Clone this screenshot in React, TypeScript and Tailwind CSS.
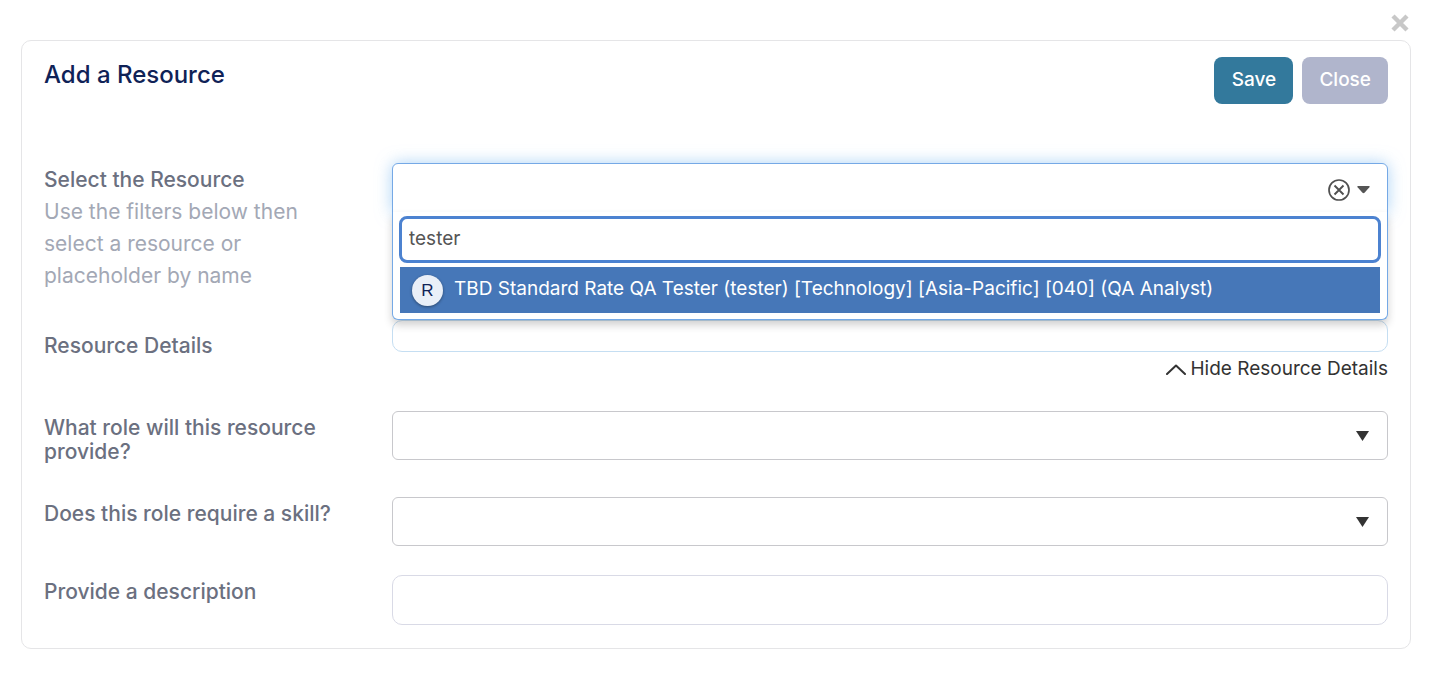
import { useState } from 'react';
import type { ReactNode } from 'react';
import clsx from 'clsx';

const RESOURCES = [
  {
    id: 'tbd-qa-tester',
    initial: 'R',
    name: 'TBD Standard Rate QA Tester (tester) [Technology] [Asia-Pacific] [040] (QA Analyst)',
  },
];

type RowProps = {
  label: string;
  htmlFor: string;
  hint?: string;
  className?: string;
  labelClassName?: string;
  children: ReactNode;
};

const FormRow = ({ label, htmlFor, hint, className, labelClassName, children }: RowProps) => (
  <div className={clsx('grid grid-cols-[300px_minmax(0,1fr)] gap-x-12', className)}>
    <div className={labelClassName}>
      <label htmlFor={htmlFor} className="block text-[21px] leading-6 font-medium text-[#6b7080]">
        {label}
      </label>
      {hint && <p className="mt-1 w-[270px] text-[21px] leading-8 text-[#a3a8b5]">{hint}</p>}
    </div>
    <div className="min-w-0">{children}</div>
  </div>
);

const SelectBox = ({ id }: { id: string }) => (
  <div className="relative">
    <select
      id={id}
      className="block h-[49px] w-full appearance-none rounded-md border border-[#c8c8cc] bg-white px-4 text-[19px]"
    >
      <option value=""></option>
    </select>
    <svg viewBox="0 0 13 10" className="pointer-events-none absolute top-5 right-[19px] h-[10px] w-[13px]" aria-hidden="true">
      <path d="M0 0h13L6.500 10z" fill="#333" />
    </svg>
  </div>
);

const ResourcePicker = () => {
  const [open, setOpen] = useState(true);
  const [query, setQuery] = useState('tester');
  const matches = RESOURCES.filter(r => r.name.toLowerCase().includes(query.toLowerCase()));

  return (
    <div className="relative">
      <div
        className={clsx(
          'flex h-[50px] items-center justify-end gap-[7px] border border-[#75a9e6] bg-white pt-1 pr-[17px] shadow-[0_0_16px_#75b5f099]',
          open ? 'rounded-t-md' : 'rounded-md'
        )}
      >
        <button type="button" aria-label="Clear selection" onClick={() => setQuery('')}>
          <svg viewBox="0 0 22 22" className="size-[22px]" fill="none" stroke="#505050">
            <circle cx="11" cy="11" r="10" strokeWidth="1.7" />
            <path d="M6.500 6.500l9 9M15.500 6.500l-9 9" strokeWidth="1.9" />
          </svg>
        </button>
        <button type="button" aria-label="Toggle options" aria-expanded={open} onClick={() => setOpen(!open)}>
          <svg viewBox="0 0 13 8" className="h-2 w-[13px]">
            <path d="M1 0h11q1.200 .2.4 1.200L7.500 6.700q-1 .9-2 0L.6 1.200Q-.2.2 1 0z" fill="#555" />
          </svg>
        </button>
      </div>
      {open && (
        <div className="absolute inset-x-0 top-[49px] z-10 rounded-b-md border border-t-0 border-[#75a9e6] bg-white px-[6px] pt-1 pb-[6px] shadow-[0_5px_8px_#00000030]">
          <input
            id="resource"
            type="text"
            value={query}
            onChange={e => setQuery(e.target.value)}
            className="block h-[47px] w-full rounded-lg border-[3px] border-[#4c82d0] bg-white px-[7px] pb-[2px] text-[19px] text-[#555] outline-none"
          />
          <ul role="listbox" className="mx-px mt-1">
            {matches.map(r => (
              <li key={r.id} role="option" aria-selected="true" className="flex h-[46px] items-center gap-[11px] bg-[#4677b8] px-3 text-white">
                <span className="flex size-[31px] shrink-0 items-center justify-center rounded-full bg-[#e9eff8] pt-[2px] font-['Liberation_Sans',sans-serif] text-[17px] text-[#0f2257] shadow-[0_1px_3px_#00000066]">
                  {r.initial}
                </span>
                <span className="truncate pb-[3px] text-[19px] leading-7">{r.name}</span>
              </li>
            ))}
          </ul>
        </div>
      )}
    </div>
  );
};

export default function App() {
  const [showDetails, setShowDetails] = useState(true);

  return (
    <div className="bg-white px-[21px] pb-10 font-['Inter',sans-serif]">
      <div className="flex h-10 justify-end pt-[14px] pr-[2px]">
        <button type="button" aria-label="Close dialog" className="size-[18px]">
          <svg viewBox="0 0 18 18" className="size-[18px]" fill="none" stroke="#c8c8c8" strokeWidth="4.4">
            <path d="M2 2l14 14M16 2L2 16" />
          </svg>
        </button>
      </div>
      <form className="rounded-[10px] border border-[#e5e5e7] px-[22px] pt-4 pb-[23px]" onSubmit={e => e.preventDefault()}>
        <header className="flex items-start justify-between">
          <h1 className="pt-[2px] text-[24px] leading-8 font-medium text-[#0f2257]">Add a Resource</h1>
          <div className="flex gap-[9px] text-[19px] font-medium text-white">
            <button type="submit" className="h-[47px] min-w-[79px] rounded-lg bg-[#33799c] px-4 pb-px">
              Save
            </button>
            <button type="button" className="h-[47px] rounded-lg bg-[#b0b5cc] px-[17px] pb-px">
              Close
            </button>
          </div>
        </header>

        <FormRow
          label="Select the Resource"
          htmlFor="resource"
          hint="Use the filters below then select a resource or placeholder by name"
          className="mt-[59px]"
          labelClassName="pt-[5px]"
        >
          <ResourcePicker />
        </FormRow>

        <FormRow label="Resource Details" htmlFor="details" className="mt-7" labelClassName="pt-[14px]">
          {showDetails && (
            <input id="details" type="text" readOnly className="block h-8 w-full rounded-[10px] border border-[#c5def2] bg-white px-3" />
          )}
          <div className="flex justify-end pt-[2px]">
            <button
              type="button"
              onClick={() => setShowDetails(!showDetails)}
              className="flex items-center gap-1 text-[19px] leading-[29px] text-[#333]"
            >
              <svg viewBox="0 0 20 12" className={clsx('h-3 w-5', !showDetails && 'rotate-180')} fill="none" stroke="#333" strokeWidth="2">
                <path d="M1 11l9-8.500 9 8.500" strokeLinecap="round" strokeLinejoin="round" />
              </svg>
              {showDetails ? 'Hide' : 'Show'} Resource Details
            </button>
          </div>
        </FormRow>

        <FormRow label="What role will this resource provide?" htmlFor="role" className="mt-7" labelClassName="pt-[5px]">
          <SelectBox id="role" />
        </FormRow>

        <FormRow label="Does this role require a skill?" htmlFor="skill" className="mt-[33px]" labelClassName="pt-[5px]">
          <SelectBox id="skill" />
        </FormRow>

        <FormRow label="Provide a description" htmlFor="description" className="mt-[29px]" labelClassName="pt-[5px]">
          <input id="description" type="text" className="block h-[50px] w-full rounded-[10px] border border-[#d9dae6] bg-white px-4 text-[19px]" />
        </FormRow>
      </form>
    </div>
  );
}
